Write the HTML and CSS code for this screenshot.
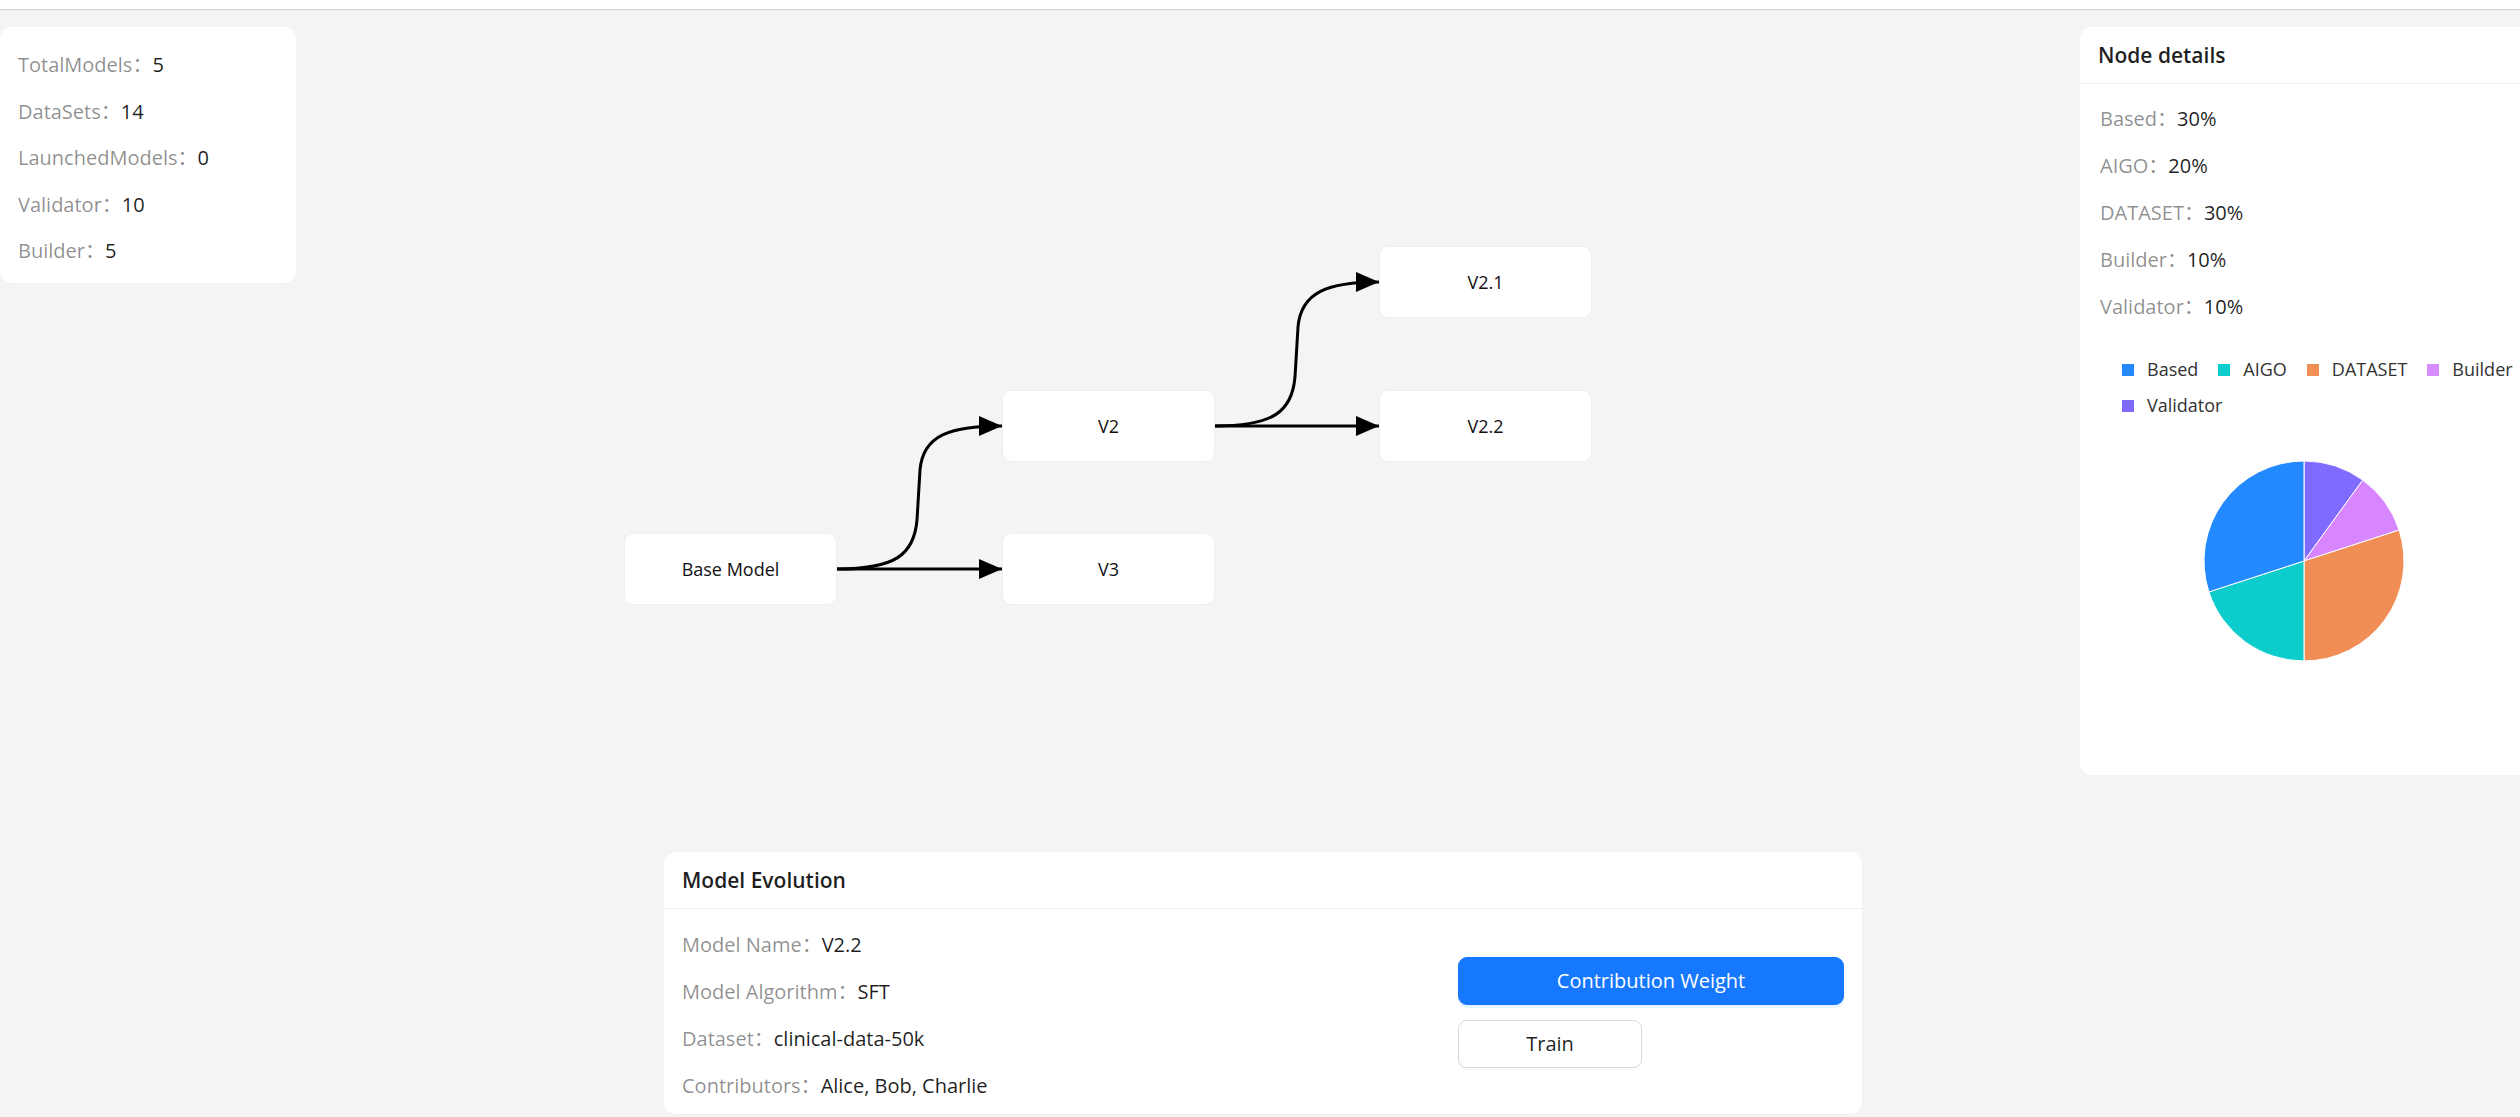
FILE: index.html
```html
<!DOCTYPE html>
<html lang="en">
<head>
<meta charset="utf-8">
<title>Model Evolution</title>
<link rel="stylesheet" href="styles.css">
</head>
<body>
<div class="topbar"></div>
<main class="canvas">
  <svg class="edges" width="2520" height="1107" viewBox="0 0 2520 1107">
    <defs>
      <marker id="arrow" markerUnits="userSpaceOnUse" markerWidth="24" markerHeight="20" refX="23" refY="10" orient="auto">
        <path class="arrow-head" d="M0,0 L23,10 L0,20 z"/>
      </marker>
    </defs>
    <path class="edge" d="M837,559 C895,559 914,545 917,510 L920,460 C923,425 950,416 1002,416" marker-end="url(#arrow)"/>
    <path class="edge" d="M837,559 L1002,559" marker-end="url(#arrow)"/>
    <path class="edge" d="M1215,416 C1273,416 1292,402 1295,367 L1298,317 C1301,282 1328,272 1379,272" marker-end="url(#arrow)"/>
    <path class="edge" d="M1215,416 L1379,416" marker-end="url(#arrow)"/>
  </svg>

  <div class="node node-base">Base Model</div>
  <div class="node node-v2">V2</div>
  <div class="node node-v3">V3</div>
  <div class="node node-v21">V2.1</div>
  <div class="node node-v22">V2.2</div>

  <section class="card stats">
    <div class="rows">
      <div class="item"><span class="label">TotalModels：</span><span class="value">5</span></div>
      <div class="item"><span class="label">DataSets：</span><span class="value">14</span></div>
      <div class="item"><span class="label">LaunchedModels：</span><span class="value">0</span></div>
      <div class="item"><span class="label">Validator：</span><span class="value">10</span></div>
      <div class="item"><span class="label">Builder：</span><span class="value">5</span></div>
    </div>
  </section>

  <section class="card details">
    <header class="card-head">Node details</header>
    <div class="card-body">
      <div class="rows">
        <div class="item"><span class="label">Based：</span><span class="value">30%</span></div>
        <div class="item"><span class="label">AIGO：</span><span class="value">20%</span></div>
        <div class="item"><span class="label">DATASET：</span><span class="value">30%</span></div>
        <div class="item"><span class="label">Builder：</span><span class="value">10%</span></div>
        <div class="item"><span class="label">Validator：</span><span class="value">10%</span></div>
      </div>
      <div class="chart">
        <div class="legend">
          <div class="legend-row">
            <span class="legend-item"><i class="sw sw-based"></i>Based</span>
            <span class="legend-item"><i class="sw sw-aigo"></i>AIGO</span>
            <span class="legend-item"><i class="sw sw-dataset"></i>DATASET</span>
            <span class="legend-item"><i class="sw sw-builder"></i>Builder</span>
          </div>
          <div class="legend-row">
            <span class="legend-item"><i class="sw sw-validator"></i>Validator</span>
          </div>
        </div>
        <svg class="pie" width="412" height="260" viewBox="0 0 412 260">
          <g transform="translate(204,130)" stroke="#fff" stroke-width="1">
            <path d="M0,0 L0,-100 A100,100 0 0 1 58.78,-80.90 Z" fill="#7863FF" fill-opacity="0.95"/>
            <path d="M0,0 L58.78,-80.90 A100,100 0 0 1 95.11,-30.90 Z" fill="#D580FF" fill-opacity="0.95"/>
            <path d="M0,0 L95.11,-30.90 A100,100 0 0 1 0,100 Z" fill="#F0884D" fill-opacity="0.95"/>
            <path d="M0,0 L0,100 A100,100 0 0 1 -95.11,30.90 Z" fill="#00C9C9" fill-opacity="0.95"/>
            <path d="M0,0 L-95.11,30.90 A100,100 0 0 1 0,-100 Z" fill="#1783FF" fill-opacity="0.95"/>
          </g>
        </svg>
      </div>
    </div>
  </section>

  <section class="card evolution">
    <header class="card-head">Model Evolution</header>
    <div class="card-body evo-body">
      <div class="evo-info rows">
        <div class="item"><span class="label">Model Name：</span><span class="value">V2.2</span></div>
        <div class="item"><span class="label">Model Algorithm：</span><span class="value">SFT</span></div>
        <div class="item"><span class="label">Dataset：</span><span class="value">clinical-data-50k</span></div>
        <div class="item"><span class="label">Contributors：</span><span class="value">Alice, Bob, Charlie</span></div>
      </div>
      <div class="evo-actions">
        <button class="btn btn-primary" type="button">Contribution Weight</button>
        <button class="btn btn-default" type="button">Train</button>
      </div>
    </div>
  </section>
</main>
</body>
</html>
```

FILE: styles.css
```css
* { box-sizing: border-box; }

html, body {
  margin: 0;
  padding: 0;
  width: 2520px;
  height: 1117px;
  overflow: hidden;
  background: #f4f4f4;
  font-family: "Open Sans", "Noto Sans", "Noto Sans CJK SC", sans-serif;
  color: rgba(0, 0, 0, 0.88);
}

.topbar {
  height: 10px;
  background: #fff;
  border-bottom: 1px solid #cfcfcf;
}

.canvas {
  position: relative;
  height: 1107px;
  background: #f4f4f4;
}

.edges {
  position: absolute;
  left: 0;
  top: 0;
}

.edge {
  fill: none;
  stroke: #000;
  stroke-width: 3;
}

.arrow-head {
  fill: #000;
  stroke: none;
}

/* diagram nodes: placed on a free canvas */
.node {
  position: absolute;
  width: 213px;
  height: 72px;
  background: #fff;
  border: 1px solid #efefef;
  border-radius: 9px;
  display: flex;
  align-items: center;
  justify-content: center;
  font-size: 18px;
  color: #111;
}
.node-base { left: 624px; top: 523px; }
.node-v2   { left: 1002px; top: 380px; }
.node-v3   { left: 1002px; top: 523px; }
.node-v21  { left: 1379px; top: 236px; }
.node-v22  { left: 1379px; top: 380px; }

/* overlay cards */
.card {
  position: absolute;
  background: #fff;
  border-radius: 12px;
}

.card-head {
  height: 57px;
  padding: 0 18px;
  display: flex;
  align-items: center;
  font-size: 21px;
  font-weight: 600;
  color: rgba(0, 0, 0, 0.88);
  border-bottom: 1px solid #efefef;
}

.card-body {
  padding: 18px 20px;
}

.rows {
  display: flex;
  flex-direction: column;
  gap: 14px;
}

.item {
  display: flex;
  line-height: 33px;
  height: 33px;
  font-size: 20px;
  white-space: nowrap;
}

.label {
  color: rgba(0, 0, 0, 0.45);
}

.value {
  color: rgba(0, 0, 0, 0.88);
}

.stats {
  left: 0;
  top: 17px;
  width: 296px;
  height: 256px;
  padding: 21px 18px 0;
}

.stats .rows { gap: 13.5px; }

.details {
  left: 2080px;
  top: 17px;
  width: 600px;
  height: 748px;
}

.chart {
  width: 412px;
  margin-top: 34px;
}

.legend {
  padding-left: 22px;
  display: flex;
  flex-direction: column;
  gap: 12px;
}

.legend-row {
  display: flex;
  gap: 20px;
  height: 24px;
  align-items: center;
}

.legend-item {
  display: flex;
  align-items: center;
  gap: 13px;
  font-size: 18px;
  color: #333;
  white-space: nowrap;
}

.sw {
  width: 12px;
  height: 12px;
  display: inline-block;
  margin-top: 2px;
}
.sw-based { background: #2389ff; }
.sw-aigo { background: #0ecccc; }
.sw-dataset { background: #f08f56; }
.sw-builder { background: #d68cfc; }
.sw-validator { background: #7e6bfc; }

.pie {
  display: block;
  margin-top: 14px;
}

.evolution {
  left: 664px;
  top: 842px;
  width: 1198px;
  height: 262px;
}

.evo-body {
  display: flex;
  align-items: center;
  padding: 19px 18px;
}

.evo-info {
  width: 776px;
}

.evo-actions {
  width: 386px;
  display: flex;
  flex-direction: column;
  align-items: flex-start;
  gap: 15px;
  margin-top: -6px;
}

.btn {
  height: 48px;
  border-radius: 9px;
  font-family: inherit;
  font-size: 20px;
  cursor: pointer;
}

.btn-primary {
  width: 386px;
  background: #1677ff;
  color: #fff;
  border: 1px solid #1677ff;
  box-shadow: 0 3px 0 rgba(5, 145, 255, 0.1);
}

.btn-default {
  width: 184px;
  background: #fff;
  color: rgba(0, 0, 0, 0.88);
  border: 1px solid #d9d9d9;
  box-shadow: 0 3px 0 rgba(0, 0, 0, 0.02);
}
```
